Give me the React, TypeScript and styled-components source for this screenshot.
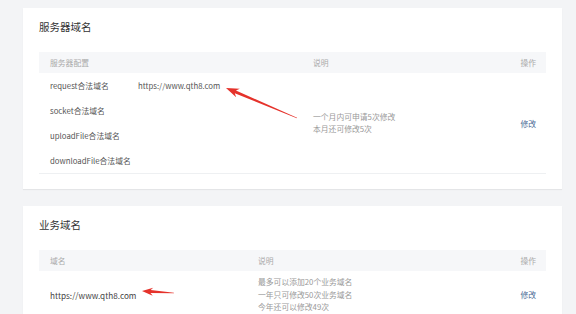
import { createGlobalStyle, styled } from "styled-components";

const GlobalStyle = createGlobalStyle`
  html, body {
    margin: 0;
    padding: 0;
    background: #f3f4f6;
    font-family: "Noto Sans CJK SC", "Noto Sans", sans-serif;
  }
`;

const Page = styled.div`
  position: relative;
  width: 576px;
  height: 314px;
  overflow: hidden;
  padding: 8px 14px 0 23px;
  box-sizing: border-box;
  display: flex;
  flex-direction: column;
  gap: 17px;
`;

const Card = styled.div`
  background: #fff;
  padding: 11px 16px 15px 16px;
  box-shadow: 0 1px 1px rgba(0, 0, 0, 0.06);
  flex-shrink: 0;
`;

const Title = styled.div`
  font-size: 10.5px;
  line-height: 16px;
  color: #333;
  margin-bottom: 17px;
`;

const Table = styled.div<{ $cols: string }>`
  display: grid;
  grid-template-columns: ${(p) => p.$cols};
  padding: 0 10px 0 11px;
  border-bottom: 1px solid #eef0f2;
  font-size: 7.8px;
`;

const HeadCell = styled.div<{ $span?: number }>`
  grid-column: span ${(p) => p.$span ?? 1};
  height: 21px;
  line-height: 21px;
  color: #aaa;
  background: #f6f7f9;
  margin: 0 -10px 0 -11px;
  padding: 0 10px 0 11px;
  &:not(:first-child) {
    margin-left: 0;
    padding-left: 0;
  }
  &:not(:last-child) {
    margin-right: 0;
    padding-right: 0;
  }
`;

const HeadRow = styled.div`
  display: contents;
`;

const Cell = styled.div<{ $col: number }>`
  grid-column: ${(p) => p.$col};
  color: #555;
  height: 25px;
  line-height: 25px;
  white-space: nowrap;
`;

const Desc = styled.div<{ $rows: string }>`
  grid-column: 3;
  grid-row: ${(p) => p.$rows};
  align-self: center;
  color: #999;
  line-height: 12.3px;
  white-space: nowrap;
`;

const Action = styled.a<{ $col: number; $rows: string }>`
  grid-column: ${(p) => p.$col};
  grid-row: ${(p) => p.$rows};
  align-self: center;
  justify-self: end;
  color: #4b6a96;
  text-decoration: none;
  cursor: pointer;
`;

const Row = styled.div`
  display: contents;
`;

const BizName = styled.div`
  grid-column: 1;
  align-self: center;
  color: #444;
  font-size: 8.2px;
`;

const BizDesc = styled.div`
  grid-column: 2;
  padding: 5px 0;
  color: #999;
  line-height: 12.5px;
  white-space: nowrap;
`;

const Overlay = styled.svg`
  position: absolute;
  left: 0;
  top: 0;
  pointer-events: none;
`;

const serverRows = [
  { name: "request合法域名", url: "https://www.qth8.com" },
  { name: "socket合法域名", url: "" },
  { name: "uploadFile合法域名", url: "" },
  { name: "downloadFile合法域名", url: "" },
];

function Arrow({ x, y, angle, len, head }: { x: number; y: number; angle: number; len: number; head: number }) {
  const w = head * 0.36;
  return (
    <polygon
      transform={`translate(${x} ${y}) rotate(${angle})`}
      points={`0,0 ${head},${-w} ${head * 0.78},${-1.5} ${len},-0.3 ${len},0.3 ${head * 0.78},1.5 ${head},${w}`}
      fill="#e5322b"
    />
  );
}

export default function App() {
  return (
    <>
      <GlobalStyle />
      <Page>
        <Card>
          <Title>服务器域名</Title>
          <Table $cols="88px 175px 1fr auto">
            <HeadRow>
              <HeadCell $span={2}>服务器配置</HeadCell>
              <HeadCell>说明</HeadCell>
              <HeadCell>操作</HeadCell>
            </HeadRow>
            {serverRows.map((r, i) => (
              <Row key={r.name}>
                <Cell $col={1} style={{ gridRow: i + 2 }}>
                  {r.name}
                </Cell>
                <Cell $col={2} style={{ gridRow: i + 2 }}>
                  {r.url}
                </Cell>
              </Row>
            ))}
            <Desc $rows="2 / 6">
              一个月内可申请5次修改
              <br />
              本月还可修改5次
            </Desc>
            <Action $col={4} $rows="2 / 6">
              修改
            </Action>
          </Table>
        </Card>
        <Card>
          <Title>业务域名</Title>
          <Table $cols="208px 1fr auto">
            <HeadRow>
              <HeadCell>域名</HeadCell>
              <HeadCell>说明</HeadCell>
              <HeadCell>操作</HeadCell>
            </HeadRow>
            <Row>
              <BizName>https://www.qth8.com</BizName>
              <BizDesc>
                最多可以添加20个业务域名
                <br />
                一年只可修改50次业务域名
                <br />
                今年还可以修改49次
              </BizDesc>
              <Action $col={3} $rows="2">
                修改
              </Action>
            </Row>
          </Table>
        </Card>
        <Overlay width="576" height="314" viewBox="0 0 576 314">
          <Arrow x={226} y={88} angle={22.9} len={77} head={13} />
          <Arrow x={142} y={291} angle={3.6} len={32} head={11} />
        </Overlay>
      </Page>
    </>
  );
}
